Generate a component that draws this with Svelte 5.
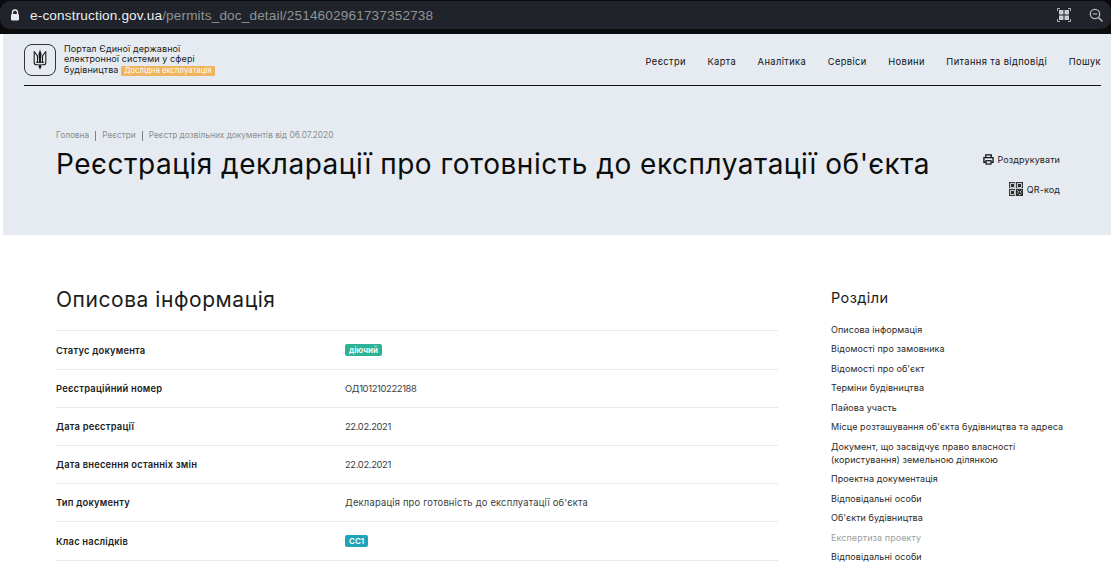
<script lang="ts">
  const nav = ["Реєстри", "Карта", "Аналітика", "Сервіси", "Новини", "Питання та відповіді", "Пошук"];

  const rows = [
    { label: "Статус документа", value: "діючий", badge: "green" },
    { label: "Реєстраційний номер", value: "ОД101210222188", numeric: true },
    { label: "Дата реєстрації", value: "22.02.2021", numeric: true },
    { label: "Дата внесення останніх змін", value: "22.02.2021", numeric: true },
    { label: "Тип документу", value: "Декларація про готовність до експлуатації об'єкта" },
    { label: "Клас наслідків", value: "СС1", badge: "teal" }
  ];

  const sections = [
    { name: "Описова інформація" },
    { name: "Відомості про замовника" },
    { name: "Відомості про об'єкт" },
    { name: "Терміни будівництва" },
    { name: "Пайова участь" },
    { name: "Місце розташування об'єкта будівництва та адреса" },
    { name: "Документ, що засвідчує право власності (користування) земельною ділянкою" },
    { name: "Проектна документація" },
    { name: "Відповідальні особи" },
    { name: "Об'єкти будівництва" },
    { name: "Експертиза проекту", muted: true },
    { name: "Відповідальні особи" }
  ];
</script>

<div class="shell">
  <div class="browser">
    <div class="urlbar">
      <svg class="lock" viewBox="0 0 10 12" width="10" height="12">
        <path d="M2.5 5V3.5a2.5 2.5 0 0 1 5 0V5" fill="none" stroke="#e8eaed" stroke-width="1.3" />
        <rect x="1" y="5" width="8" height="6.5" rx="1" fill="#e8eaed" />
      </svg>
      <span class="url"><b>e-construction.gov.ua</b>/permits_doc_detail/2514602961737352738</span>
      <svg class="tool qr-tool" viewBox="0 0 14 14" width="14" height="14">
        <path d="M.5 3V.5H3M11 .5h2.500V3M13.500 11v2.500H11M3 13.500H.5V11" fill="none" stroke="#aeb1b5" />
        <rect x="2" y="2" width="4.500" height="4.500" fill="#c9cbce" />
        <rect x="7.500" y="2" width="4.500" height="4.500" fill="#c9cbce" />
        <rect x="2" y="7.500" width="4.500" height="4.500" fill="#c9cbce" />
        <rect x="7.500" y="7.500" width="4.500" height="4.500" fill="#c9cbce" />
      </svg>
      <svg class="tool" viewBox="0 0 14 14" width="14" height="14">
        <circle cx="6" cy="6" r="4.700" fill="none" stroke="#b9bcc0" stroke-width="1.300" />
        <path d="M9.500 9.500 13.500 13.500" stroke="#b9bcc0" stroke-width="1.500" />
        <path d="M3.700 6h4.600" stroke="#b9bcc0" stroke-width="1.100" />
      </svg>
    </div>
  </div>

  <div class="page">
    <section class="hero">
      <header>
        <div class="brand">
          <div class="logo">
            <svg viewBox="0 0 14 21" width="14" height="21">
              <g fill="none" stroke="#1c1c1c" stroke-width="1.100">
                <path d="M1.200 2.500V13.500c0 1.500.8 2.300 2.300 2.300H6" />
                <path d="M12.800 2.500V13.500c0 1.500-.8 2.300-2.300 2.300H8" />
                <path d="M1.200 2.500 4.500 7V13" />
                <path d="M12.800 2.500 9.500 7V13" />
                <path d="M3 13.300h8" />
              </g>
              <path d="M7 .5 5.500 5l.6 8.500h1.800L8.500 5Z" fill="#1c1c1c" />
              <path d="M7 14.500 5.400 17.500 7 20.500l1.600-3Z" fill="#1c1c1c" />
            </svg>
          </div>
          <div class="brand-text">
            Портал Єдиної державної<br />
            електронної системи у сфері<br />
            будівництва <span class="beta">Дослідна експлуатація</span>
          </div>
        </div>
        <nav>
          {#each nav as item}
            <a href="#top">{item}</a>
          {/each}
        </nav>
      </header>

      <div class="hero-main">
        <div class="titles">
          <div class="crumbs">
            <a href="#top">Головна</a><i></i>
            <a href="#top">Реєстри</a><i></i>
            <a href="#top">Реєстр дозвільних документів від 06.07.2020</a>
          </div>
          <h1>Реєстрація декларації про готовність до експлуатації об'єкта</h1>
        </div>
        <div class="actions">
          <a href="#top">
            <svg viewBox="0 0 12 12" width="11" height="11">
              <path d="M3 3.500V1h6v2.500M3 9H1V4h10v5H9" fill="none" stroke="#111" stroke-width="1.400" />
              <rect x="3.300" y="7.300" width="5.400" height="3.700" fill="none" stroke="#111" stroke-width="1.300" />
            </svg>
            Роздрукувати
          </a>
          <a href="#top" class="qr">
            <svg viewBox="0 0 15 15" width="14" height="14">
              <rect width="15" height="15" fill="#2b2b2b" />
              <path d="M1.500 1.500h4.500v4.500H1.500ZM9 1.500h4.500v4.500H9ZM1.500 9h4.500v4.500H1.500Z" fill="none" stroke="#e5ebf1" />
              <path d="M7 0v15M0 7h15" stroke="#e5ebf1" stroke-width=".9" />
              <path d="M9 9l1.500 1.500L9 12M13.500 9 12 10.500l1.500 1.500M10.500 13.500h2" fill="none" stroke="#e5ebf1" />
            </svg>
            QR-код
          </a>
        </div>
      </div>
    </section>

    <main>
      <div class="info">
        <h2>Описова інформація</h2>
        <div class="table">
          {#each rows as row}
            <div class="row">
              <div class="label">{row.label}</div>
              <div class="value" class:numeric={row.numeric}>
                {#if row.badge}
                  <span class="badge {row.badge}">{row.value}</span>
                {:else}
                  {row.value}
                {/if}
              </div>
            </div>
          {/each}
        </div>
      </div>

      <aside>
        <h3>Розділи</h3>
        <ul>
          {#each sections as s}
            <li class:muted={s.muted}>{s.name}</li>
          {/each}
        </ul>
      </aside>
    </main>
  </div>
</div>

<style>
  :global(body) {
    margin: 0;
    background: #fff;
  }

  .shell {
    height: 566px;
    overflow: hidden;
    font-family: Inter, "Noto Sans", sans-serif;
    color: #1c1c1c;
  }

  a {
    color: inherit;
    text-decoration: none;
  }

  .browser {
    height: 34px;
    background: #0b0b0e;
    padding-top: 1px;
    box-sizing: border-box;
  }

  .urlbar {
    height: 28px;
    background: #202329;
    border-radius: 10px;
    display: flex;
    align-items: center;
    padding: 0 8px 0 10px;
  }

  .lock {
    margin-right: 10px;
  }

  .url {
    flex: 1;
    font: 13.6px "Liberation Sans", Arial, sans-serif;
    letter-spacing: 0.15px;
    color: #8f9397;
  }

  .url b {
    font-weight: 400;
    color: #eceef0;
  }

  .qr-tool {
    margin-right: 18px;
  }

  .page {
    padding-left: 3px;
  }

  .hero {
    height: 201px;
    background: #e5ebf1;
    box-sizing: border-box;
    padding: 0 10px 0 21px;
  }

  header {
    height: 51px;
    border-bottom: 1px solid #111;
    display: flex;
    justify-content: space-between;
    align-items: center;
  }

  .brand {
    display: flex;
    align-items: center;
    gap: 8px;
  }

  .logo {
    width: 30px;
    height: 30px;
    border: 1px solid #333;
    border-radius: 8px;
    display: flex;
    align-items: center;
    justify-content: center;
  }

  .brand-text {
    font-size: 9px;
    line-height: 10.5px;
    letter-spacing: 0.1px;
  }

  .beta {
    display: inline-block;
    background: #efb45e;
    color: #fff;
    font-size: 7.600px;
    line-height: 10px;
    padding: 0 3px;
    border-radius: 1px;
    letter-spacing: 0.1px;
  }

  nav {
    display: flex;
    gap: 21.500px;
    font-size: 9.300px;
    font-weight: 400;
    letter-spacing: 0.4px;
    margin-top: 3px;
    color: #111;
  }

  .hero-main {
    display: flex;
    justify-content: space-between;
    padding: 44px 41px 0 32px;
  }

  .crumbs {
    font-size: 8.300px;
    line-height: 11px;
    color: #8a8e92;
    display: flex;
    align-items: center;
  }

  .crumbs i {
    width: 1px;
    height: 10px;
    background: #808488;
    margin: 0 6px;
  }

  h1 {
    margin: 6px 0 0;
    font-size: 28px;
    line-height: 34px;
    font-weight: 400;
    letter-spacing: 0.52px;
    color: #0c0c0c;
    white-space: nowrap;
  }

  .actions {
    display: flex;
    flex-direction: column;
    align-items: flex-end;
    gap: 17px;
    font-size: 9px;
    letter-spacing: 0.1px;
    padding-top: 24px;
  }

  .actions a {
    display: flex;
    align-items: center;
    gap: 3px;
  }

  .actions .qr {
    gap: 4px;
  }

  main {
    display: flex;
    padding: 52px 0 0 53px;
  }

  .info {
    width: 722px;
  }

  h2 {
    margin: 0;
    font-size: 21px;
    line-height: 26px;
    font-weight: 400;
    letter-spacing: 0.55px;
  }

  .table {
    margin-top: 17px;
    border-top: 1px solid #e5ebf1;
  }

  .row {
    height: 37px;
    border-bottom: 1px solid #e5ebf1;
    display: flex;
    align-items: center;
    font-size: 9.400px;
    letter-spacing: 0.2px;
  }

  .row:first-child,
  .row:last-child {
    height: 38px;
  }

  .label {
    width: 289px;
    font-weight: 600;
  }

  .value {
    color: #3a3d40;
  }

  .value.numeric {
    letter-spacing: -0.35px;
  }

  .badge {
    display: block;
    width: fit-content;
    color: #fff;
    font-size: 8px;
    font-weight: 600;
    line-height: 12px;
    padding: 0 4px;
    border-radius: 2px;
    letter-spacing: 0;
  }

  .badge.green {
    background: #2cb397;
  }

  .badge.teal {
    background: #23a3b8;
  }

  aside {
    width: 240px;
    margin-left: 53px;
    padding-top: 2px;
  }

  h3 {
    margin: 0;
    font-size: 14.500px;
    line-height: 18px;
    font-weight: 400;
    letter-spacing: 0.4px;
  }

  ul {
    list-style: none;
    margin: 15.500px 0 0;
    padding: 0;
    font-size: 9px;
    line-height: 13px;
    letter-spacing: 0.08px;
    color: #2a2a2a;
  }

  li {
    margin-bottom: 6.500px;
  }

  li.muted {
    color: #9b9ea1;
  }
</style>
